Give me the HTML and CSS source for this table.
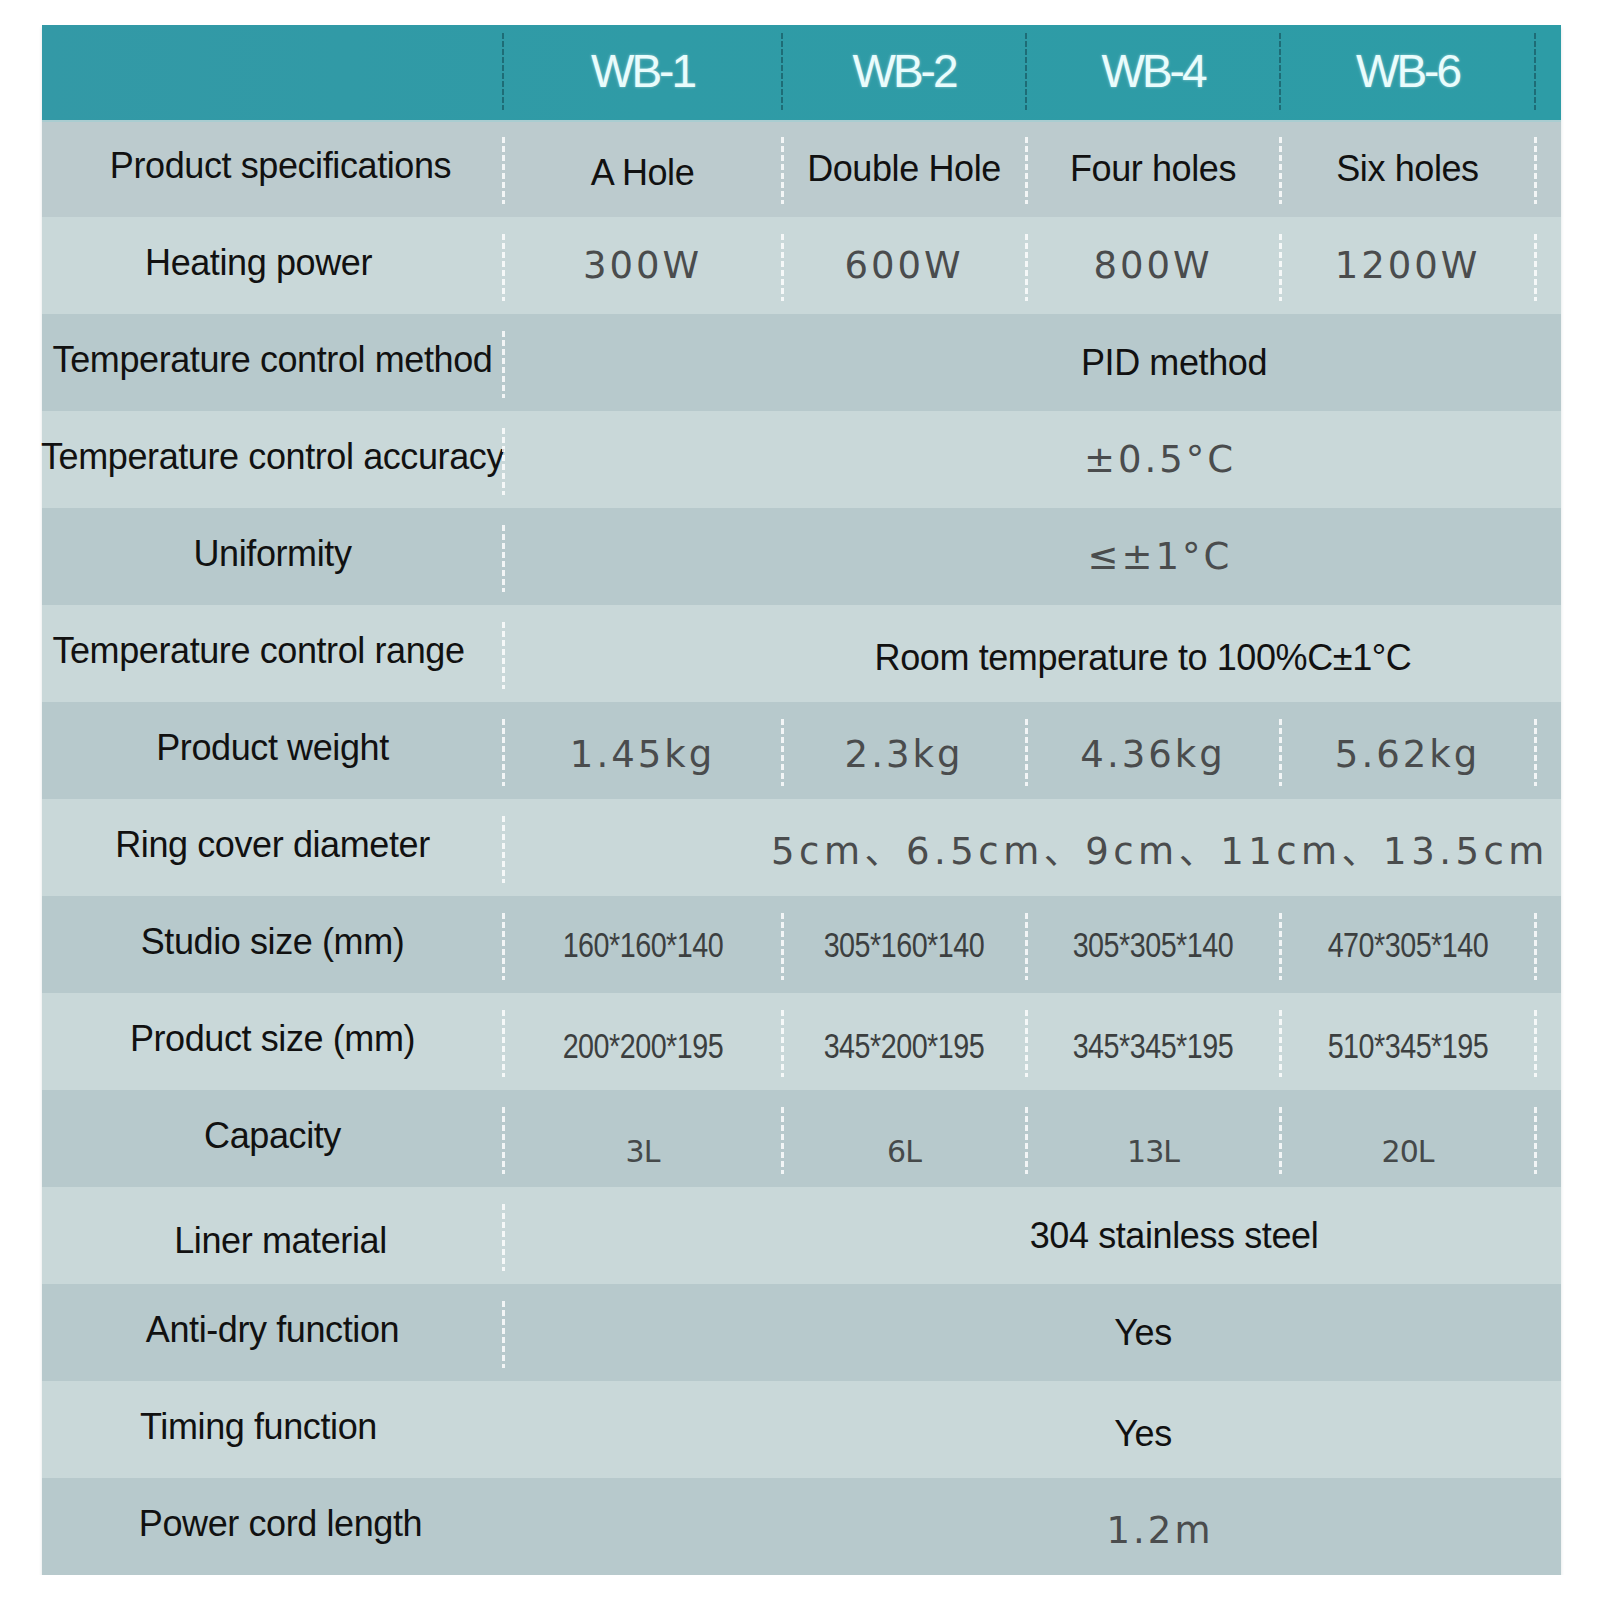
FILE: index.html
```html
<!DOCTYPE html>
<html lang="en">
<head>
<meta charset="utf-8">
<title>Water bath specifications</title>
<link rel="stylesheet" href="styles.css">
</head>
<body>
<div class="spec">
  <div class="row head">
    <div class="cell label"></div>
    <div class="cell dv">WB-1</div>
    <div class="cell dv">WB-2</div>
    <div class="cell dv">WB-4</div>
    <div class="cell dv">WB-6</div>
    <div class="cell dv"></div>
  </div>

  <div class="row dark first">
    <div class="cell label nr">Product specifications</div>
    <div class="cell dv txt low">A Hole</div>
    <div class="cell dv txt">Double Hole</div>
    <div class="cell dv txt">Four holes</div>
    <div class="cell dv txt">Six holes</div>
    <div class="cell dv"></div>
  </div>

  <div class="row light">
    <div class="cell label nl">Heating power</div>
    <div class="cell dv num">300W</div>
    <div class="cell dv num">600W</div>
    <div class="cell dv num">800W</div>
    <div class="cell dv num">1200W</div>
    <div class="cell dv"></div>
  </div>

  <div class="row dark">
    <div class="cell label">Temperature control method</div>
    <div class="cell dv span sr txt">PID method</div>
  </div>

  <div class="row light">
    <div class="cell label">Temperature control accuracy</div>
    <div class="cell dv span num">±0.5°C</div>
  </div>

  <div class="row dark">
    <div class="cell label">Uniformity</div>
    <div class="cell dv span num">≤±1°C</div>
  </div>

  <div class="row light">
    <div class="cell label nl">Temperature control range</div>
    <div class="cell dv span sl txt low">Room temperature to 100%C±1°C</div>
  </div>

  <div class="row dark">
    <div class="cell label">Product weight</div>
    <div class="cell dv num low">1.45kg</div>
    <div class="cell dv num low">2.3kg</div>
    <div class="cell dv num low">4.36kg</div>
    <div class="cell dv num low">5.62kg</div>
    <div class="cell dv"></div>
  </div>

  <div class="row light">
    <div class="cell label">Ring cover diameter</div>
    <div class="cell dv span num wide">5cm、6.5cm、9cm、11cm、13.5cm</div>
  </div>

  <div class="row dark">
    <div class="cell label">Studio size (mm)</div>
    <div class="cell dv"><span class="narrow">160*160*140</span></div>
    <div class="cell dv"><span class="narrow">305*160*140</span></div>
    <div class="cell dv"><span class="narrow">305*305*140</span></div>
    <div class="cell dv"><span class="narrow">470*305*140</span></div>
    <div class="cell dv"></div>
  </div>

  <div class="row light">
    <div class="cell label">Product size (mm)</div>
    <div class="cell dv low"><span class="narrow">200*200*195</span></div>
    <div class="cell dv low"><span class="narrow">345*200*195</span></div>
    <div class="cell dv low"><span class="narrow">345*345*195</span></div>
    <div class="cell dv low"><span class="narrow">510*345*195</span></div>
    <div class="cell dv"></div>
  </div>

  <div class="row dark">
    <div class="cell label">Capacity</div>
    <div class="cell dv small lower">3L</div>
    <div class="cell dv small lower">6L</div>
    <div class="cell dv small lower">13L</div>
    <div class="cell dv small lower">20L</div>
    <div class="cell dv"></div>
  </div>

  <div class="row light">
    <div class="cell label low nr">Liner material</div>
    <div class="cell dv span sr txt">304 stainless steel</div>
  </div>

  <div class="row dark">
    <div class="cell label">Anti-dry function</div>
    <div class="cell dv span sl txt">Yes</div>
  </div>

  <div class="row light">
    <div class="cell label nl">Timing function</div>
    <div class="cell span sl txt low">Yes</div>
  </div>

  <div class="row dark last">
    <div class="cell label nr">Power cord length</div>
    <div class="cell span num low">1.2m</div>
  </div>
</div>
</body>
</html>
```

FILE: styles.css
```css
html, body {
  margin: 0;
  padding: 0;
  background: #ffffff;
}

.spec {
  width: 1519px;
  margin: 25px 0 0 42px;
  font-family: "Liberation Sans", Arial, sans-serif;
  color: #111111;
  box-shadow: 0 3px 3px rgba(120, 140, 145, 0.25);
}

.row {
  display: grid;
  grid-template-columns: 461px 279px 244px 254px 255px 26px;
  height: 97px;
}

.row.head {
  height: 95px;
  background: linear-gradient(to right, #3399a6 0%, #2f9ba6 40%, #2d9ca6 100%);
}

.row.dark {
  background: #b7c9cc;
}

.row.first {
  background: #bccbce;
  box-shadow: inset 0 2px 0 #a9cdd1;
}

.row.light {
  background: #c9d8d9;
}

.cell {
  position: relative;
  display: flex;
  align-items: center;
  justify-content: center;
  white-space: nowrap;
}

.label {
  font-size: 36px;
  letter-spacing: -0.4px;
  padding-bottom: 6px;
}

.label.nl {
  padding-right: 28px;
}

.label.nr {
  padding-left: 16px;
}

.head .cell {
  font-size: 46px;
  letter-spacing: -3px;
  color: #e9fcfc;
  text-shadow: 0 0 3px rgba(255, 255, 255, 0.45);
  padding-bottom: 4px;
}

.dv::before {
  content: "";
  position: absolute;
  left: -1.5px;
  top: 17px;
  bottom: 13px;
  width: 3px;
  background: repeating-linear-gradient(to bottom, rgba(255, 255, 255, 0.82) 0 6px, transparent 6px 9px);
}

.head .dv::before {
  top: 8px;
  bottom: 10px;
  width: 2px;
  left: -1px;
  background: repeating-linear-gradient(to bottom, #1e6c76 0 6px, transparent 6px 8px);
}

.span {
  grid-column: span 5;
  padding-left: 256px;
}

.span.sl {
  padding-left: 222px;
}

.span.sr {
  padding-left: 284px;
}

.txt {
  font-size: 36px;
  letter-spacing: -0.4px;
  color: #111111;
}

.num {
  font-family: "DejaVu Sans", "Noto Sans CJK SC", sans-serif;
  font-size: 37px;
  letter-spacing: 3px;
  color: #4a4c4d;
}

.wide {
  letter-spacing: 4.5px;
}

.narrow {
  display: inline-block;
  font-size: 35px;
  letter-spacing: -0.6px;
  color: #3c3f40;
  transform: scaleX(0.82);
}

.small {
  font-family: "DejaVu Sans", sans-serif;
  font-size: 30px;
  letter-spacing: -1px;
  color: #45494a;
}

.low {
  padding-top: 8px;
}

.lower {
  padding-top: 26px;
}

.label.low {
  padding-top: 10px;
  padding-bottom: 0;
}
```
